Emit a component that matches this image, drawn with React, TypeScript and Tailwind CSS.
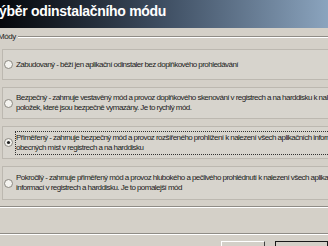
import React from "react";

function Radio({ checked }: { checked?: boolean }) {
  return (
    <svg width="9" height="9" viewBox="0 0 9 9" className="shrink-0">
      <circle cx="4.5" cy="4.5" r="4" fill="#f4f3ef" stroke="#8a8780" strokeWidth="1" />
      {checked && <circle cx="4.5" cy="4.5" r="1.6" fill="#222" />}
    </svg>
  );
}

function Option({
  lines,
  checked,
  focus,
  h,
}: {
  lines: string[];
  checked?: boolean;
  focus?: boolean;
  h: string;
}) {
  return (
    <div className={`ml-[2px] w-[340px] border border-[#bcb8b0] bg-[#d7d4cd] flex items-center ${h}`}>
      <div className="pl-[1px] pr-[3px] flex items-center">
        <Radio checked={checked} />
      </div>
      <div
        className={`flex-1 leading-[10px] text-[8px] tracking-[-0.55px] text-[#1c1c1c] py-[1px] ${
          focus ? "outline outline-1 outline-dotted outline-[#333]" : ""
        }`}
      >
        {lines.map((l, i) => (
          <div key={i} className="whitespace-nowrap">
            {l}
          </div>
        ))}
      </div>
    </div>
  );
}

export default function App() {
  return (
    <div
      className="w-[328px] h-[246px] overflow-hidden bg-[#d4d0c8] flex flex-col"
      style={{ fontFamily: '"Liberation Sans", Arial, sans-serif' }}
    >
      <div className="h-[28px] shrink-0 bg-gradient-to-r from-[#06080c] via-[#3f4f63] to-[#8ba4be] flex items-start">
        <div className="ml-[-10px] mt-[2px] text-white font-bold text-[14px] tracking-[-0.3px] leading-[18px] whitespace-nowrap">
          Výběr odinstalačního módu
        </div>
      </div>
      <div className="h-[1px] bg-[#f4f3ef]" />
      <div className="flex items-center mt-[4px] h-[10px]">
        <span className="ml-[-2px] text-[8px] tracking-[-0.4px] text-[#222] leading-[10px]">Módy</span>
        <div className="flex-1 ml-[2px] flex flex-col">
          <div className="h-[1px] bg-[#8f8c86]" />
          <div className="h-[1px] bg-[#ffffff]" />
        </div>
      </div>
      <div className="mt-[7px] flex flex-col gap-[7px]">
        <Option
          h="h-[31px]"
          lines={["Zabudovaný - běží jen aplikační odinstaler bez doplňkového prohledávání"]}
        />
        <Option
          h="h-[32px]"
          lines={[
            "Bezpečný - zahrnuje vestavěný mód a provoz doplňkového skenování v registrech a na harddisku k nalezení",
            "položek, které jsou bezpečně vymazány. Je to rychlý mód.",
          ]}
        />
        <Option
          h="h-[33px]"
          checked
          focus
          lines={[
            "Přiměřený - zahrnuje bezpečný mód a provoz rozšířeného prohlížení k nalezení všech aplikačních informací",
            "obecných míst v registrech a na harddisku",
          ]}
        />
        <Option
          h="h-[34px]"
          lines={[
            "Pokročilý - zahrnuje přiměřený mód a provoz hlubokého a pečlivého prohlédnutí k nalezení všech aplikačních",
            "informací v registrech a harddisku. Je to pomalejší mód",
          ]}
        />
      </div>
      <div className="mt-[6px] flex flex-col">
        <div className="h-[1px] bg-[#8f8c86]" />
        <div className="h-[1px] bg-[#ffffff]" />
      </div>
      <div className="mt-[25px] flex flex-col">
        <div className="h-[1px] bg-[#8f8c86]" />
        <div className="h-[1px] bg-[#ffffff]" />
      </div>
      <div className="mt-[6px] flex gap-[10px] pl-[221px]">
        <div className="w-[49px] h-[20px] border border-[#ffffff] border-r-[#404040] bg-[#d4d0c8]" />
        <div className="w-[60px] h-[20px] border border-[#1a1a1a] bg-[#d4d0c8]" />
      </div>
    </div>
  );
}
